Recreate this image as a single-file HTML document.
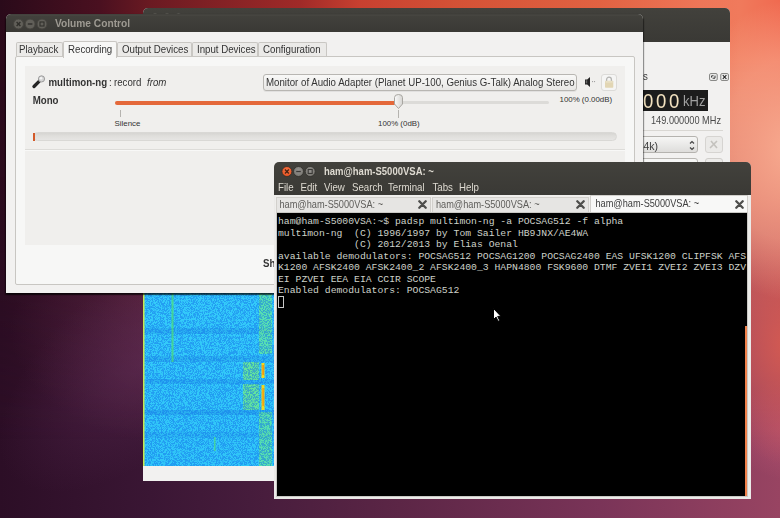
<!DOCTYPE html>
<html><head><meta charset="utf-8">
<style>
*{margin:0;padding:0;box-sizing:border-box}
html,body{width:780px;height:518px;overflow:hidden}
body{position:relative;font-family:"Liberation Sans",sans-serif;background:#3a1030}
.a{position:absolute}
.t{position:absolute;white-space:nowrap;color:#333;font-size:9.7px;line-height:9.7px;transform:scaleY(1.12);transform-origin:0 85%}
#bg{left:0;top:0;width:780px;height:518px;
background:linear-gradient(90deg,#2c0e26 0px,#3a1634 150px,#461c3c 250px,#5c2646 400px,#7a3458 600px,#984462 780px)}
#bgt{left:0;top:0;width:780px;height:518px;
background:linear-gradient(90deg,#2a0a1a 0px,#4a1020 100px,#6a1a22 150px,#a02a28 300px,#c84030 360px,#d45236 460px,#e26242 600px,#ee7658 700px,#f07a5c 740px,#f06a50 780px);
-webkit-mask-image:linear-gradient(180deg,#000 0px,#000 60px,rgba(0,0,0,.7) 200px,rgba(0,0,0,.25) 320px,transparent 440px)}
#bgg{left:0;top:0;width:780px;height:518px;
background:radial-gradient(ellipse 110px 150px at 790px 150px,rgba(250,178,150,.9),rgba(250,178,150,.5) 60%,rgba(250,178,150,0)),
radial-gradient(ellipse 70px 120px at 785px 345px,rgba(218,92,80,.85),rgba(218,92,80,0)),
radial-gradient(ellipse 60px 50px at 790px 430px,rgba(200,90,120,.5),rgba(200,90,120,0)),
radial-gradient(ellipse 200px 120px at 210px 330px,rgba(110,55,90,.55),rgba(110,55,90,0))}
.wb{position:absolute;width:10px;height:10px;border-radius:50%;background:#5e5c56;border:1px solid #4c4a45}
.tab{position:absolute;border:1px solid #c9c7c3;border-bottom:none;background:#ebeae8;border-radius:2px 2px 0 0}
.mono{position:absolute;font-family:"Liberation Mono",monospace;font-size:9.75px;line-height:11.58px;color:#cdd1c9;white-space:pre}
</style></head><body>
<div id="bg" class="a"></div>
<div id="bgt" class="a"></div>
<div id="bgg" class="a"></div>
<div class="a" style="left:-30px;top:280px;width:340px;height:170px;transform:rotate(-40deg);background:radial-gradient(ellipse 50% 50% at 50% 50%,rgba(100,48,92,.4),rgba(100,48,92,0))"></div>

<!-- ============ back window (gqrx) ============ -->
<div class="a" style="left:143px;top:8px;width:586.5px;height:473px;background:#f2f1f0;border-radius:5px 5px 0 0"></div>
<div class="a" style="left:143px;top:8px;width:586.5px;height:34px;background:linear-gradient(#42413c,#3a3935);border-radius:5px 5px 0 0"></div>
<svg class="a" style="left:143px;top:8px" width="140" height="6"><g fill="#6e6c66"><circle cx="12" cy="10.5" r="5"/><circle cx="24" cy="10.5" r="5"/><circle cx="35.5" cy="10.5" r="5"/></g></svg>
<!-- dock title -->
<div class="t" style="left:643px;top:72px;color:#3c3c3c">s</div>
<svg class="a" style="left:708.5px;top:72.5px" width="20" height="8" viewBox="0 0 20 8">
  <rect x=".6" y=".6" width="7.6" height="6.8" rx="1.2" fill="#f4f4f3" stroke="#7e7e7c" stroke-width="1"/>
  <path d="M2.6 4.6V2.8h2M6 2.6v2.6H3.6" fill="none" stroke="#333" stroke-width="1"/>
  <rect x="11.8" y=".6" width="7.6" height="6.8" rx="1.2" fill="#f4f4f3" stroke="#7e7e7c" stroke-width="1"/>
  <path d="M13.8 2.2l3.6 3.6M17.4 2.2l-3.6 3.6" stroke="#2a2a2a" stroke-width="1.2"/>
</svg>
<!-- freq display -->
<div class="a" style="left:643px;top:90px;width:65px;height:21px;background:#1c1c1c"></div>
<div class="t" style="left:643.4px;top:91.7px;font-size:19.5px;line-height:19.5px;color:#f3e2c0;transform:scaleX(.95);transform-origin:0 0">0</div>
<div class="t" style="left:656.4px;top:91.7px;font-size:19.5px;line-height:19.5px;color:#f3e2c0;transform:scaleX(.95);transform-origin:0 0">0</div>
<div class="t" style="left:669.4px;top:91.7px;font-size:19.5px;line-height:19.5px;color:#f3e2c0;transform:scaleX(.95);transform-origin:0 0">0</div>
<div class="t" style="left:683px;top:94.5px;font-size:13px;line-height:13px;color:#a0a0a0">kHz</div>
<div class="t" style="left:651px;top:116.5px;color:#4a4a4a;font-size:9.2px;line-height:9.2px">149.000000 MHz</div>
<div class="a" style="left:643px;top:130px;width:80px;height:1px;background:#d9d7d3"></div>
<div class="a" style="left:630px;top:136px;width:68px;height:17px;border:1px solid #b5b3af;border-radius:3px;background:linear-gradient(#f6f6f5,#dedddb)"></div>
<div class="t" style="left:643.5px;top:140.5px;color:#3c3c3c;font-size:10.5px;line-height:10.5px">4k)</div>
<svg class="a" style="left:689px;top:140px" width="6" height="11" viewBox="0 0 6 11"><path d="M1 3.5L3 1.5 5 3.5M1 7.5L3 9.5 5 7.5" fill="none" stroke="#444" stroke-width="1.2"/></svg>
<div class="a" style="left:705px;top:136px;width:18px;height:17px;border:1px solid #d6d4d1;border-radius:3px;background:#ebeae8"></div><svg class="a" style="left:708px;top:139px" width="12" height="11" viewBox="0 0 12 11"><path d="M2 9L9 2M3 2l6 7" stroke="#c4c2be" stroke-width="1.6"/></svg>
<div class="a" style="left:630px;top:158px;width:68px;height:10px;border:1px solid #b9b7b3;border-radius:3px;background:#f6f6f5"></div>
<div class="a" style="left:705px;top:158px;width:18px;height:10px;border:1px solid #d0cecb;border-radius:3px;background:#ecebe9"></div>
<!-- waterfall -->
<div class="a" style="left:143px;top:292px;width:132px;height:174px;background:#1e9ff0;overflow:hidden">
  <svg width="132" height="174" style="position:absolute;left:0;top:0">
    <defs>
      <filter id="n" x="0" y="0" width="100%" height="100%" color-interpolation-filters="sRGB">
        <feTurbulence type="fractalNoise" baseFrequency="1.4 2.2" numOctaves="1" seed="5"/>
        <feColorMatrix type="matrix" values="0 0 0 0 0.08  0 0 0 0 0.45  0 0 0 0 0.92  9 0 0 0 -4.0"/>
      </filter>
      <linearGradient id="wfb" x1="0" y1="0" x2="0" y2="1">
        <stop offset="0" stop-color="#34cbfa"/><stop offset="1" stop-color="#30c6f8"/>
      </linearGradient>
    </defs>
    <rect width="132" height="174" fill="url(#wfb)"/>
    <rect x="0" y="36" width="132" height="6" fill="#1a80e0" opacity="0.28"/>
    <rect x="0" y="64" width="132" height="6" fill="#1a80e0" opacity="0.28"/>
    <rect x="0" y="87" width="132" height="5" fill="#1a80e0" opacity="0.3"/>
    <rect x="0" y="118" width="132" height="5" fill="#1a80e0" opacity="0.35"/>
    <rect x="0" y="140" width="132" height="6" fill="#1a80e0" opacity="0.20"/>
    <rect x="116" y="0" width="13" height="62" fill="#70f080" opacity="0.6"/>
    <rect x="100" y="70" width="16" height="18" fill="#78f078" opacity="0.7"/>
    <rect x="100" y="92" width="16" height="26" fill="#78f078" opacity="0.7"/>
    <rect x="116" y="120" width="13" height="54" fill="#70f080" opacity="0.6"/>
    <rect width="132" height="174" filter="url(#n)" opacity="0.5"/>
    <rect x="0" y="0" width="1.5" height="174" fill="#c8e850"/>
    <rect x="28.5" y="0" width="2" height="70" fill="#50e070" opacity="0.7"/>
    <rect x="118.5" y="71" width="3" height="15" fill="#f8d818"/><rect x="119.5" y="73" width="1.2" height="10" fill="#f08010"/>
    <rect x="118.5" y="93" width="3" height="25" fill="#f0d820"/><rect x="119.5" y="96" width="1.2" height="18" fill="#f09010"/>
    <rect x="71" y="145" width="1.5" height="14" fill="#50e080" opacity="0.7"/>
  </svg>
</div>

<!-- ============ volume control ============ -->
<div class="a" style="left:6px;top:14px;width:637px;height:279px;background:#f2f1f0;border-radius:5px 5px 0 0;box-shadow:0 1px 2px rgba(0,0,0,.5),-1px 2px 1px rgba(0,0,0,.35),1px 2px 1px rgba(0,0,0,.35)"></div>
<div class="a" style="left:6px;top:14px;width:637px;height:18px;background:linear-gradient(#3c3b37 0,#4a4944 1px,#42413c 2px,#3a3935);border-radius:5px 5px 0 0"></div>
<svg class="a" style="left:12px;top:18px" width="36" height="12" viewBox="0 0 36 12">
  <g stroke="#45433e" stroke-width="1" fill="#615f59">
    <circle cx="6.5" cy="6" r="5"/><circle cx="18.1" cy="6" r="5"/><circle cx="30" cy="6" r="5"/>
  </g>
  <g stroke="#302f2b" stroke-width="1.4" fill="none">
    <path d="M4.6 4.1l3.8 3.8M8.4 4.1l-3.8 3.8"/>
    <path d="M15.8 6h4.6"/>
    <rect x="28" y="4" width="4" height="4" stroke-width="1.1"/>
  </g>
</svg>
<div class="t" style="left:55px;top:19px;font-size:10.2px;line-height:10px;font-weight:bold;color:#9e9a92">Volume Control</div>
<!-- notebook page -->
<div class="a" style="left:15px;top:56px;width:620px;height:229px;background:#f7f7f6;border:1px solid #c8c6c2;border-radius:2px"></div>
<!-- tabs -->
<div class="tab" style="left:16px;top:42px;width:47px;height:14px"></div>
<div class="tab" style="left:117px;top:42px;width:75px;height:14px"></div>
<div class="tab" style="left:192px;top:42px;width:66px;height:14px"></div>
<div class="tab" style="left:258px;top:42px;width:69px;height:14px"></div>
<div class="tab" style="left:63px;top:41px;width:54px;height:17px;background:#f7f7f6"></div>
<div class="t" style="left:19px;top:45px">Playback</div>
<div class="t" style="left:68px;top:44.5px">Recording</div>
<div class="t" style="left:122px;top:45px">Output Devices</div>
<div class="t" style="left:197px;top:45px">Input Devices</div>
<div class="t" style="left:263px;top:45px">Configuration</div>
<!-- inner box -->
<div class="a" style="left:25px;top:66px;width:600px;height:179px;background:#f0efed"></div>
<!-- mic icon -->
<svg class="a" style="left:31px;top:75px" width="15" height="14" viewBox="0 0 15 14">
  <line x1="3" y1="11.5" x2="8.6" y2="5.9" stroke="#fff" stroke-opacity=".6" stroke-width="4.6" stroke-linecap="round"/>
  <line x1="3" y1="11.5" x2="8.6" y2="5.9" stroke="#262626" stroke-width="3.4" stroke-linecap="round"/>
  <circle cx="10.5" cy="3.9" r="3.1" fill="#d4d4d4" stroke="#8a8a8a" stroke-width=".8"/>
  <circle cx="10" cy="3.3" r="1.3" fill="#f4f4f4"/>
</svg>
<div class="t" style="left:48.5px;top:77.8px;font-weight:bold">multimon-ng</div>
<div class="t" style="left:109px;top:77.8px">:</div>
<div class="t" style="left:114px;top:77.8px">record</div>
<div class="t" style="left:147px;top:77.8px;font-style:italic">from</div>
<div class="t" style="left:32.7px;top:95.8px;font-weight:bold">Mono</div>
<!-- combo -->
<div class="a" style="left:263px;top:74px;width:314px;height:17px;border:1px solid #b8b6b2;border-radius:3px;background:linear-gradient(#f8f8f7,#e8e7e5);box-shadow:0 1px 0 rgba(0,0,0,.06)"></div>
<div class="t" style="left:266px;top:77.8px">Monitor of Audio Adapter (Planet UP-100, Genius G-Talk) Analog Stereo</div>
<!-- speaker icon -->
<svg class="a" style="left:584px;top:76px" width="12" height="12" viewBox="0 0 12 12">
  <path d="M1 3.5h2.2L6 1v10L3.2 8.5H1z" fill="#262626"/>
  <path d="M1.8 4.3h1.4v3H1.8z" fill="#6a6a6a"/>
  <circle cx="8.6" cy="5.6" r=".55" fill="#8a8a8a"/><circle cx="10.6" cy="5.6" r=".55" fill="#8a8a8a"/>
</svg>
<!-- lock button -->
<div class="a" style="left:601px;top:74px;width:16px;height:17px;border:1px solid #dcdbd8;border-radius:3px;background:#f5f5f4"></div>
<svg class="a" style="left:604px;top:76px" width="10" height="12" viewBox="0 0 10 12">
  <path d="M2.6 5.2V3.6a2.4 2.4 0 0 1 4.8 0v1.6" fill="none" stroke="#b4b4b2" stroke-width="1.3"/>
  <rect x="1" y="4.8" width="8.3" height="6.9" rx=".8" fill="#e2d6b4"/>
  <rect x="1.5" y="5.3" width="7.3" height="1.2" fill="#ece4cc"/>
</svg>
<!-- slider -->
<div class="a" style="left:115px;top:101px;width:434px;height:3px;background:#dcdbd8;border-radius:2px"></div>
<div class="a" style="left:115px;top:101px;width:281px;height:4px;background:#e4683a;border-radius:2px"></div>
<svg class="a" style="left:393px;top:94px" width="11" height="16" viewBox="0 0 11 16">
  <defs><linearGradient id="hg" x1="0" x2="1"><stop offset="0" stop-color="#fafafa"/><stop offset="1" stop-color="#d6d5d2"/></linearGradient></defs>
  <path d="M1.5 3.5a4 3 0 0 1 8 0V10l-4 4.5-4-4.5z" fill="url(#hg)" stroke="#a8a6a1" stroke-width="1"/>
</svg>
<div class="t" style="left:559.5px;top:96px;font-size:7.9px;line-height:7.9px;transform:none">100% (0.00dB)</div>
<div class="a" style="left:120px;top:110px;width:1px;height:7px;background:#b5b3af"></div>
<div class="a" style="left:398px;top:110px;width:1px;height:8px;background:#b5b3af"></div>
<div class="t" style="left:114.5px;top:120px;font-size:7.9px;line-height:7.9px;transform:none">Silence</div>
<div class="t" style="left:378px;top:120px;font-size:7.9px;line-height:7.9px;transform:none">100% (0dB)</div>
<!-- level bar -->
<div class="a" style="left:33px;top:132px;width:584px;height:9px;background:linear-gradient(#d6d5d2,#dfdedb 40%,#e6e5e3);border:1px solid #d9d8d5;border-radius:4.5px"></div>
<div class="a" style="left:33px;top:133px;width:2px;height:8px;background:#d35a2a"></div>
<div class="a" style="left:25px;top:149px;width:600px;height:1px;background:#dddcd9"></div><div class="a" style="left:25px;top:150px;width:600px;height:1px;background:#f8f8f7"></div>
<div class="t" style="left:263px;top:259px;font-weight:bold">Sh</div>

<!-- ============ terminal ============ -->
<div class="a" style="left:274px;top:162px;width:477px;height:337px;background:#ebeae8;border-radius:5px 5px 0 0"></div>
<div class="a" style="left:274px;top:162px;width:477px;height:33px;background:linear-gradient(#42413c,#3a3935);border-radius:5px 5px 0 0"></div>
<svg class="a" style="left:280px;top:165px" width="38" height="13" viewBox="0 0 38 13">
  <defs><radialGradient id="cg" cx="50%" cy="40%" r="60%"><stop offset="0" stop-color="#f8784a"/><stop offset="1" stop-color="#e8501e"/></radialGradient>
  <radialGradient id="gg" cx="50%" cy="40%" r="60%"><stop offset="0" stop-color="#959390"/><stop offset="1" stop-color="#77756f"/></radialGradient></defs>
  <circle cx="6.9" cy="6.5" r="5" fill="url(#cg)" stroke="#2e2d2a" stroke-width=".8"/>
  <circle cx="18.5" cy="6.5" r="5" fill="url(#gg)" stroke="#2e2d2a" stroke-width=".8"/>
  <circle cx="30.2" cy="6.5" r="5" fill="url(#gg)" stroke="#2e2d2a" stroke-width=".8"/>
  <g stroke="#4a2414" stroke-width="1.4" fill="none"><path d="M5 4.6l3.8 3.8M8.8 4.6l-3.8 3.8"/></g>
  <g stroke="#3a3936" stroke-width="1.3" fill="none"><path d="M16.2 6.5h4.6"/><rect x="28.2" y="4.5" width="4" height="4" stroke-width="1.1"/></g>
</svg>
<div class="t" style="left:324px;top:167px;font-size:9.5px;line-height:9.5px;font-weight:bold;color:#dfdbd2">ham@ham-S5000VSA: ~</div>
<div class="t" style="left:278px;top:183px;color:#dfdbd2">File</div>
<div class="t" style="left:300.5px;top:183px;color:#dfdbd2">Edit</div>
<div class="t" style="left:324px;top:183px;color:#dfdbd2">View</div>
<div class="t" style="left:352px;top:183px;color:#dfdbd2">Search</div>
<div class="t" style="left:388px;top:183px;color:#dfdbd2">Terminal</div>
<div class="t" style="left:432.5px;top:183px;color:#dfdbd2">Tabs</div>
<div class="t" style="left:459px;top:183px;color:#dfdbd2">Help</div>
<!-- tabs -->
<div class="a" style="left:275px;top:195px;width:475px;height:18px;background:#efeeec"></div>
<div class="a" style="left:276px;top:197px;width:155px;height:16px;background:#e6e5e3;border:1px solid #d2d0cc;border-bottom:none"></div>
<div class="a" style="left:432px;top:197px;width:157px;height:16px;background:#e6e5e3;border:1px solid #d2d0cc;border-bottom:none"></div>
<div class="a" style="left:590px;top:195px;width:158px;height:18px;background:#f8f8f7;border:1px solid #d2d0cc;border-bottom:none"></div>
<div class="t" style="left:279.5px;top:200.5px;color:#5e5d5a;font-size:9.2px;line-height:9.2px">ham@ham-S5000VSA: ~</div>
<div class="t" style="left:436px;top:200.5px;color:#5e5d5a;font-size:9.2px;line-height:9.2px">ham@ham-S5000VSA: ~</div>
<div class="t" style="left:595.5px;top:200px;color:#3c3c3c;font-size:9.2px;line-height:9.2px">ham@ham-S5000VSA: ~</div>
<svg class="a" style="left:417.5px;top:200px" width="9" height="9" viewBox="0 0 9 9"><path d="M1.3 1.3l6.4 6.4M7.7 1.3l-6.4 6.4" stroke="#4e4e4c" stroke-width="2.3" stroke-linecap="round"/></svg>
<svg class="a" style="left:575.5px;top:200px" width="9" height="9" viewBox="0 0 9 9"><path d="M1.3 1.3l6.4 6.4M7.7 1.3l-6.4 6.4" stroke="#4e4e4c" stroke-width="2.3" stroke-linecap="round"/></svg>
<svg class="a" style="left:734.5px;top:200px" width="9" height="9" viewBox="0 0 9 9"><path d="M1.3 1.3l6.4 6.4M7.7 1.3l-6.4 6.4" stroke="#4e4e4c" stroke-width="2.3" stroke-linecap="round"/></svg>
<!-- terminal body -->
<div class="a" style="left:277px;top:213px;width:470px;height:283px;background:#000;box-shadow:0 0 0 1px #c9c8c4"></div>
<div class="a" style="left:745px;top:326px;width:2px;height:170px;background:#f0804a"></div>
<div class="mono" style="left:278px;top:216px">ham@ham-S5000VSA:~$ padsp multimon-ng -a POCSAG512 -f alpha
multimon-ng  (C) 1996/1997 by Tom Sailer HB9JNX/AE4WA
             (C) 2012/2013 by Elias Oenal
available demodulators: POCSAG512 POCSAG1200 POCSAG2400 EAS UFSK1200 CLIPFSK AFS
K1200 AFSK2400 AFSK2400_2 AFSK2400_3 HAPN4800 FSK9600 DTMF ZVEI1 ZVEI2 ZVEI3 DZV
EI PZVEI EEA EIA CCIR SCOPE
Enabled demodulators: POCSAG512</div>
<div class="a" style="left:278px;top:296px;width:6px;height:12px;border:1px solid #c8c8c8"></div>
<!-- mouse cursor -->
<svg class="a" style="left:493px;top:308px" width="9" height="14" viewBox="0 0 9 14">
  <path d="M.5.5v11l2.6-2.4 2 4.2 1.6-.8-2-4.1H8z" fill="#fff" stroke="#000" stroke-width="1"/>
</svg>
</body></html>
